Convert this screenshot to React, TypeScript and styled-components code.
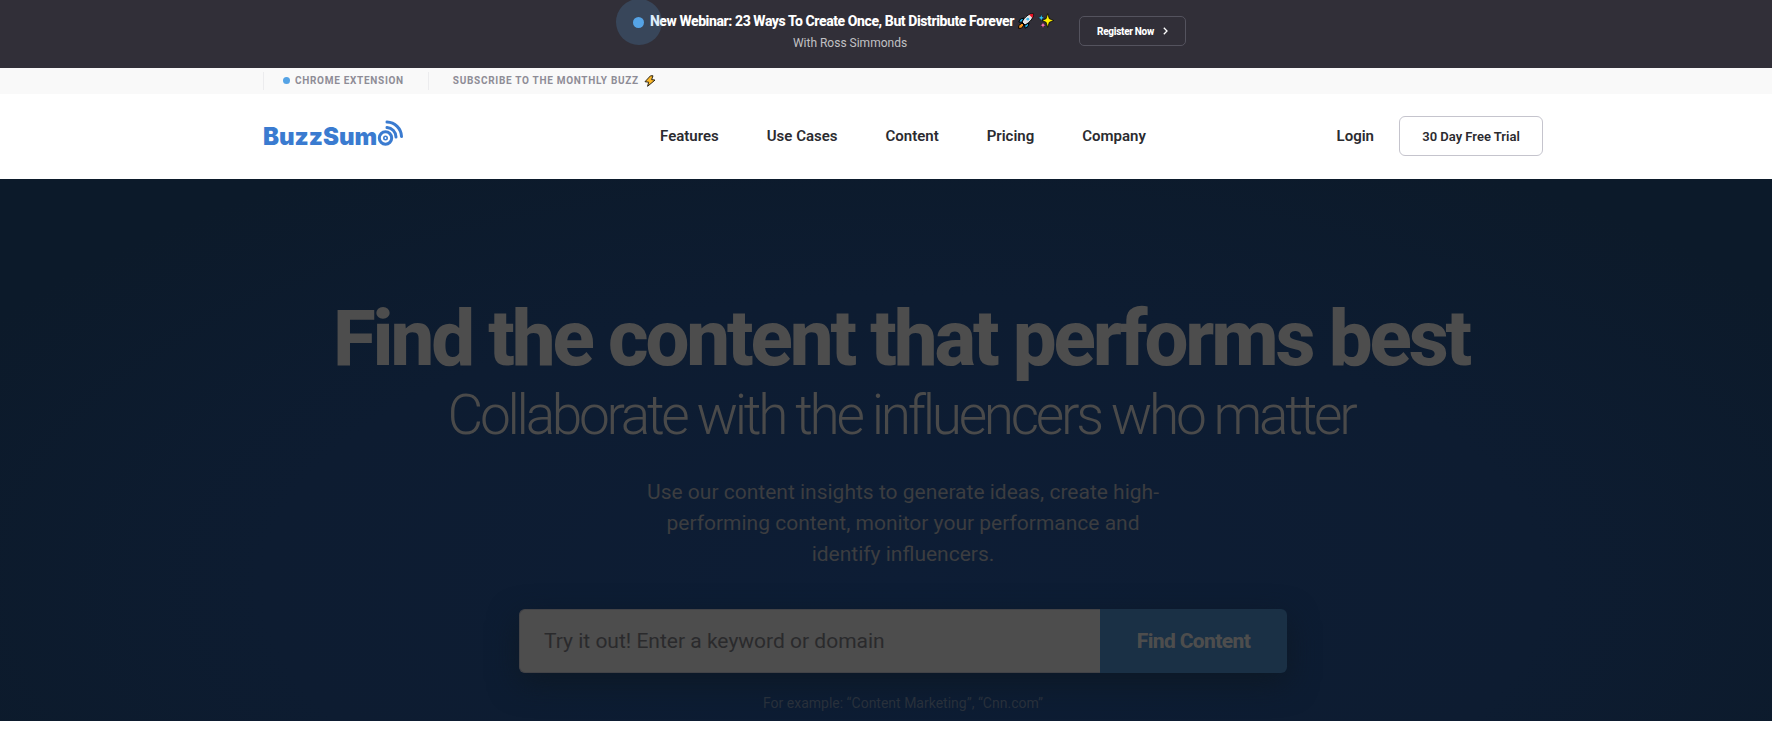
import React from 'react';
import styled, { createGlobalStyle } from 'styled-components';

const GlobalStyle = createGlobalStyle`
  * { box-sizing: border-box; }
  body {
    margin: 0;
    background: #fff;
    font-family: Roboto, "Liberation Sans", sans-serif;
    color: #2b2b30;
  }
  a { color: inherit; text-decoration: none; }
  h1, h2, p { margin: 0; }
`;

/* Every band of the page keeps a gutter on its left side. */
const Band = styled.div`
  padding-left: 34px;
`;

const Container = styled.div`
  width: 100%;
  max-width: 1280px;
  margin: 0 auto;
`;

const Banner = styled(Band)`
  background: #312f38;
  color: #fff;
`;

const BannerInner = styled(Container)`
  display: flex;
  justify-content: center;
  align-items: center;
  gap: 25px;
  padding: 10px 0 14px 30px;
`;

const BannerText = styled.div`
  text-align: center;
`;

const BannerTitle = styled.p`
  position: relative;
  display: flex;
  align-items: center;
  gap: 4px;
  font-size: 14px;
  font-weight: 800;
  line-height: 22px;
  letter-spacing: -0.03em;
`;

const BannerSub = styled.p`
  padding-right: 4px;
  font-size: 12px;
  line-height: 22px;
  color: #c1c1c4;
`;

const Pulse = styled.span`
  position: absolute;
  left: -34px;
  top: -11px;
  width: 46px;
  height: 46px;
  border-radius: 50%;
  background: rgba(85, 163, 229, 0.2);
  display: grid;
  place-items: center;
`;

const Dot = styled.span<{ $size: number }>`
  width: ${(p) => p.$size}px;
  height: ${(p) => p.$size}px;
  border-radius: 50%;
  background: #55a3e5;
`;

const RegisterButton = styled.button`
  display: flex;
  align-items: center;
  justify-content: space-between;
  width: 107px;
  height: 30px;
  margin-bottom: 2px;
  padding: 0 17px;
  border: 1px solid #54535e;
  border-radius: 5px;
  background: transparent;
  color: #fff;
  font: 800 10px Roboto, sans-serif;
  letter-spacing: -0.03em;
`;

const SubBar = styled(Band)`
  background: #f9f9f9;
`;

const SubLinks = styled(Container)`
  display: flex;
  padding: 4px 0;
`;

const SubLink = styled.a`
  display: flex;
  align-items: center;
  gap: 5px;
  height: 18px;
  padding: 0 24px 1px 19px;
  border-left: 1px solid #ececee;
  font-size: 10px;
  font-weight: 700;
  letter-spacing: 0.07em;
  text-transform: uppercase;
  color: #8e8c96;
  & + & { padding-left: 24px; }
`;

const Header = styled(Band)`
  background: #fff;
`;

const HeaderInner = styled(Container)`
  display: grid;
  grid-template-columns: 1fr auto 1fr;
  align-items: center;
  padding: 22px 0 23px;
`;

const Logo = styled.a`
  display: flex;
  align-items: flex-start;
  height: 34px;
  color: #3a7bd0;
`;

const LogoText = styled.span`
  font: 900 24px/36px Inter, sans-serif;
`;

const LogoMark = styled.svg`
  display: block;
  width: 28px;
  height: 28px;
`;

const Nav = styled.nav`
  display: flex;
  gap: 48px;
`;

const NavLink = styled.a`
  font-size: 15px;
  font-weight: 600;
  line-height: 24px;
`;

const Account = styled.div`
  display: flex;
  justify-content: flex-end;
  align-items: center;
  gap: 25px;
`;

const TrialButton = styled.button`
  width: 144px;
  height: 40px;
  border: 1px solid #c5c4cd;
  border-radius: 6px;
  background: #fff;
  color: #2b2b30;
  font: 600 13px Roboto, sans-serif;
`;

const Hero = styled(Band)`
  background: radial-gradient(ellipse at 51% 75%, #0d1d35 0%, #0d1c31 50%, #0c1a2a 85%);
`;

const HeroInner = styled(Container)`
  display: flex;
  flex-direction: column;
  align-items: center;
  padding: 120px 0 8px;
  text-align: center;
`;

const Title = styled.h1`
  padding-right: 4px;
  font-size: 78px;
  font-weight: 800;
  line-height: 80px;
  letter-spacing: -0.04em;
  color: #4d4d4d;
`;

const Subtitle = styled.h2`
  padding-right: 4px;
  font-size: 55px;
  font-weight: 300;
  line-height: 72px;
  letter-spacing: -0.06em;
  color: #4a4a4a;
`;

const Lead = styled.p`
  max-width: 540px;
  margin-top: 26px;
  font-size: 21px;
  line-height: 31px;
  color: #3c3d40;
`;

const SearchForm = styled.form`
  display: flex;
  width: 100%;
  max-width: 768px;
  height: 64px;
  margin-top: 39px;
  border-radius: 6px;
  box-shadow: 0 10px 30px rgba(13, 24, 36, 0.9);
`;

const SearchInput = styled.input`
  flex: 1;
  min-width: 0;
  padding: 0 24px;
  border: 1px solid #434347;
  border-right: 0;
  border-radius: 6px 0 0 6px;
  background: #4d4d4d;
  font: 400 21px Roboto, sans-serif;
  color: #2a2a2c;
  &::placeholder { color: #2a2a2c; opacity: 1; }
`;

const SearchButton = styled.button`
  width: 187px;
  border: 0;
  border-radius: 0 6px 6px 0;
  background: #1a3045;
  color: #4d4d4d;
  font: 800 21px Roboto, sans-serif;
  letter-spacing: -0.03em;
`;

const Example = styled.p`
  margin-top: 20px;
  font-size: 14px;
  line-height: 20px;
  color: #28303b;
`;

const Rocket = () => (
  <svg width="16" height="16" viewBox="0 0 16 16" aria-label="rocket">
    <path d="M6 5 2.5 6 .8 9l3 .3zM11 10l-1 3.500-3 1.700L6.700 12z" fill="#1fb4ee" stroke="#000" />
    <path d="M4 10 .8 12.500.600 15.400l2.900-.200L6 12z" fill="#f7941d" stroke="#000" />
    <path d="M15.400.600C11 .500 7 3.500 4 9l3 3c5.500-3 8.500-7 8.400-11.400z" fill="#e4e4e4" stroke="#000" />
    <path d="M15.200.800c-1.700 0-3 .2-4.200.8l3.400 3.400c.6-1.200.8-2.500.8-4.200z" fill="#e81224" />
    <circle cx="9.800" cy="6.200" r="1.400" fill="#39b9ee" />
  </svg>
);

const Sparkles = () => (
  <svg width="16" height="16" viewBox="0 0 16 16" aria-label="sparkles">
    <path d="M9.700.600l1.600 5.100 4.400 1.800-4.400 1.800-1.600 5.100-1.600-5.100L4 7.500l4.100-1.800z" fill="#fff100" stroke="#000" strokeWidth=".7" />
    <path d="M3.300 1.500l.9 2.400 2.200.9-2.200.9-.9 2.400-.9-2.400L.300 4.800l2.100-.9z" fill="#31c5f4" stroke="#000" strokeWidth=".3" />
    <path d="M5 9.200l.9 2.100 2.100.9-2.100.9-.9 2.100-.9-2.100-2.100-.9 2.100-.9z" fill="#f06eb4" stroke="#000" strokeWidth=".3" />
  </svg>
);

const Bolt = () => (
  <svg width="12" height="12" viewBox="0 0 12 12" aria-label="lightning">
    <path d="M6.500.800 1 6.700l3.700.500L3.600 11.300 11 5.100 7.600 4.600 9 .800z" fill="#fdb827" stroke="#2b2414" strokeLinejoin="round" />
  </svg>
);

const navItems = ['Features', 'Use Cases', 'Content', 'Pricing', 'Company'];

export default function App() {
  return (
    <>
      <GlobalStyle />
      <Banner>
        <BannerInner>
          <BannerText>
            <BannerTitle>
              New Webinar: 23 Ways To Create Once, But Distribute Forever
              <Rocket />
              <Sparkles />
              <Pulse>
                <Dot $size={11} />
              </Pulse>
            </BannerTitle>
            <BannerSub>With Ross Simmonds</BannerSub>
          </BannerText>
          <RegisterButton type="button">
            Register Now
            <svg width="5" height="8" viewBox="0 0 5 8" fill="none" stroke="currentColor" strokeWidth="1.300">
              <path d="M.8.800 4 4 .8 7.200" />
            </svg>
          </RegisterButton>
        </BannerInner>
      </Banner>
      <SubBar>
        <SubLinks>
          <SubLink href="#extension">
            <Dot $size={7} />
            Chrome Extension
          </SubLink>
          <SubLink href="#newsletter">
            Subscribe to the monthly Buzz
            <Bolt />
          </SubLink>
        </SubLinks>
      </SubBar>
      <Header as="header">
        <HeaderInner>
          <Logo href="#home">
            <LogoText>BuzzSum</LogoText>
            <LogoMark viewBox="0 0 28 28" fill="none" stroke="currentColor" aria-label="o">
              <circle cx="8.500" cy="19" r="6.200" strokeWidth="3" />
              <circle cx="8.500" cy="19" r="1.700" strokeWidth="1.600" />
              <path d="M10 8.500A9.500 9.500 0 0 1 19 18" strokeWidth="3" strokeLinecap="round" />
              <path d="M10 3A15 15 0 0 1 24.500 17.500" strokeWidth="3" strokeLinecap="round" />
            </LogoMark>
          </Logo>
          <Nav>
            {navItems.map((item) => (
              <NavLink key={item} href="#menu">{item}</NavLink>
            ))}
          </Nav>
          <Account>
            <NavLink href="#login">Login</NavLink>
            <TrialButton type="button">30 Day Free Trial</TrialButton>
          </Account>
        </HeaderInner>
      </Header>
      <Hero as="main">
        <HeroInner>
          <Title>Find the content that performs best</Title>
          <Subtitle>Collaborate with the influencers who matter</Subtitle>
          <Lead>
            Use our content insights to generate ideas, create high-performing content, monitor your
            performance and identify influencers.
          </Lead>
          <SearchForm>
            <SearchInput
              type="text"
              aria-label="Keyword or domain"
              placeholder="Try it out! Enter a keyword or domain"
            />
            <SearchButton type="submit">Find Content</SearchButton>
          </SearchForm>
          <Example>For example: “Content Marketing”, “Cnn.com”</Example>
        </HeroInner>
      </Hero>
    </>
  );
}
